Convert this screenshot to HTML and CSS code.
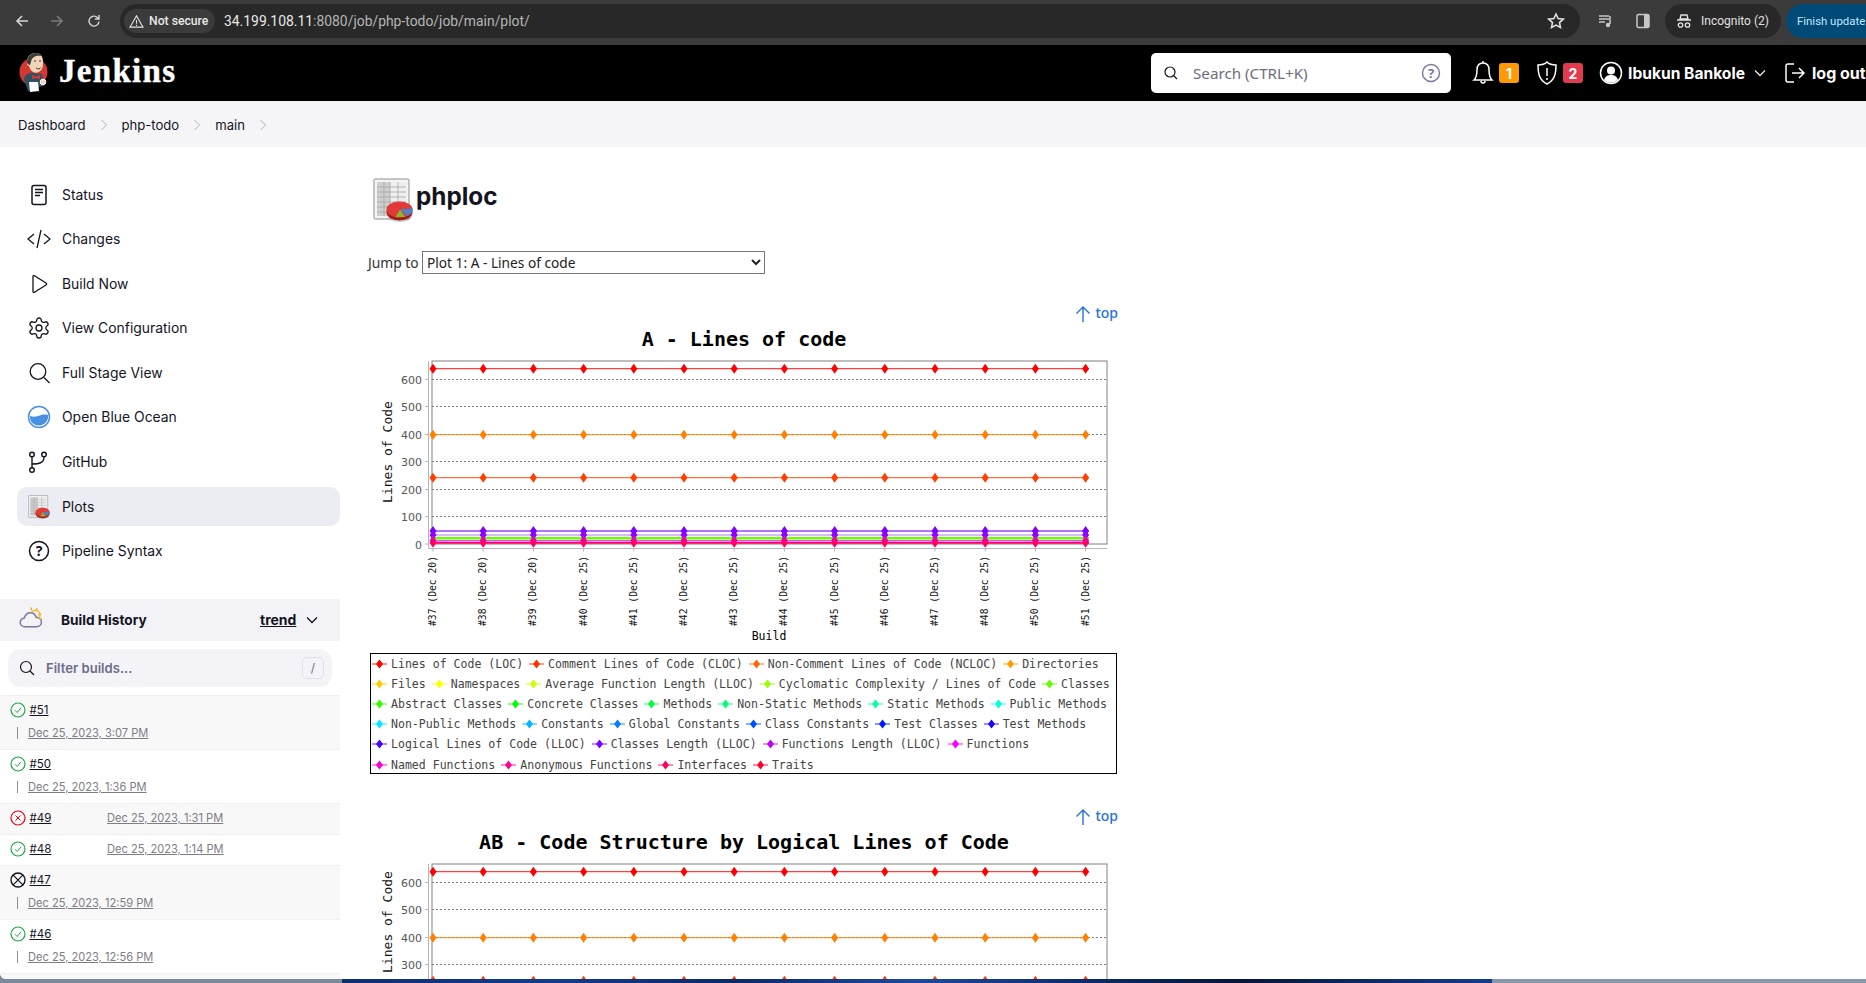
FILE: index.html
```html
<!DOCTYPE html>
<html lang="en">
<head>
<meta charset="utf-8">
<title>phploc [Jenkins]</title>
<link rel="stylesheet" href="styles.css">
</head>
<body>
<svg class="sprite" aria-hidden="true">
  <defs>
    <symbol id="plot-icon" viewBox="0 0 40 44">
      <rect x="1" y="1" width="35" height="40" rx="1" fill="#f4f4f2" stroke="#8f8f8f"/>
      <rect x="4" y="4" width="29" height="34" fill="#cfcfcf"/>
      <path d="M17 4h16v34H17z" fill="#efefef"/>
      <path d="M4 9h29M4 14h29M4 19h29M4 24h29M4 29h29M4 34h29M11 4v34M17 4v34M25 4v34" stroke="#a5a5a5" stroke-width=".8"/>
      <ellipse cx="27" cy="38" rx="12" ry="6" fill="#555" opacity=".3"/>
      <ellipse cx="26.500" cy="34" rx="13" ry="8.500" fill="#a91616"/>
      <ellipse cx="26.500" cy="31.500" rx="13" ry="8" fill="#e23a36"/>
      <path d="M27 31.500l12.500-1.200a13 8 0 0 1-5.500 7.800z" fill="#4f83c4"/>
      <path d="M27 31.500l5 7.600-9.500.2z" fill="#82bb2c"/>
    </symbol>
    <symbol id="ok" viewBox="0 0 16 16">
      <circle cx="8" cy="8" r="7" fill="none" stroke="#1ea64a" stroke-width="1.200"/>
      <path d="M5 8.300l2.200 2.200L11 5.800" fill="none" stroke="#1ea64a" stroke-width="1"/>
    </symbol>
    <symbol id="mk" viewBox="0 0 15 10">
      <path d="M0 5h15" stroke="currentColor" stroke-width="1.500" opacity=".6"/>
      <path d="M7.500 .5L11 5l-3.500 4.500L4 5z" fill="currentColor"/>
    </symbol>
    <path id="d" d="M0-5L3.500 0 0 5-3.500 0z"/>
    <g id="row">
      <use href="#d" x="65"/><use href="#d" x="115.200"/><use href="#d" x="165.400"/><use href="#d" x="215.600"/><use href="#d" x="265.800"/><use href="#d" x="316"/><use href="#d" x="366.200"/><use href="#d" x="416.400"/><use href="#d" x="466.600"/><use href="#d" x="516.800"/><use href="#d" x="567"/><use href="#d" x="617.200"/><use href="#d" x="667.400"/><use href="#d" x="717.600"/>
    </g>
  </defs>
</svg>

<div class="window">
  <div class="chrome">
    <svg class="c-ico back" viewBox="0 0 16 16"><path d="M14 8H3M8 3L3 8l5 5" fill="none" stroke="#d6d6d6" stroke-width="1.500"/></svg>
    <svg class="c-ico fwd" viewBox="0 0 16 16"><path d="M2 8h11M8 3l5 5-5 5" fill="none" stroke="#7b7b7b" stroke-width="1.500"/></svg>
    <svg class="c-ico reload" viewBox="0 0 16 16"><path d="M13 8.500A5 5 0 1 1 11.500 4.500L13 6M13 2v4H9" fill="none" stroke="#d6d6d6" stroke-width="1.400"/></svg>
    <div class="omnibox">
      <div class="chip">
        <svg class="warn" viewBox="0 0 16 16"><path d="M8 2L15 14H1zM8 6.500v4M8 11.500v1.200" fill="none" stroke="#e4e4e4" stroke-width="1.100"/></svg>
        <span>Not secure</span>
      </div>
      <span class="url">34.199.108.11<span class="dim">:8080/job/php-todo/job/main/plot/</span></span>
      <svg class="star" viewBox="0 0 16 16"><path d="M8 1.800l1.900 4.100 4.500.5-3.300 3 .9 4.400L8 11.600l-4 2.200.9-4.400-3.300-3 4.500-.5z" fill="none" stroke="#e0e0e0" stroke-width="1.400"/></svg>
    </div>
    <svg class="c-ico media" viewBox="0 0 16 16"><path d="M1 3h10M1 6h10M1 9h6M12 3v8" fill="none" stroke="#c9c9c9" stroke-width="1.500"/><circle cx="10" cy="12" r="2.200" fill="#c9c9c9"/></svg>
    <svg class="c-ico panel" viewBox="0 0 16 16"><rect x="2" y="1.500" width="12" height="13" rx="1.500" fill="none" stroke="#c9c9c9" stroke-width="1.500"/><rect x="9" y="2" width="5" height="12" fill="#c9c9c9"/></svg>
    <div class="incognito">
      <svg class="inc-ico" viewBox="0 0 16 16"><path d="M5 2h6l1 4H4zM1 7h14" fill="none" stroke="#e2e2e2" stroke-width="1.400"/><circle cx="4.500" cy="12" r="2.200" fill="none" stroke="#e2e2e2" stroke-width="1.300"/><circle cx="11.500" cy="12" r="2.200" fill="none" stroke="#e2e2e2" stroke-width="1.300"/></svg>
      <span>Incognito (2)</span>
    </div>
    <div class="finish">Finish update</div>
  </div>

  <header class="topbar">
    <svg class="logo" viewBox="0 0 30 40">
      <circle cx="14.500" cy="20" r="14" fill="#d33833"/>
      <path d="M5 27c1-5 6-7 10-6l8 1 2 12-5 1-1 4H9z" fill="#335061"/>
      <path d="M10 30h9l1 9-9 1z" fill="#fff"/>
      <circle cx="24" cy="30" r="2.800" fill="#f0d6b7" stroke="#fff"/>
      <path d="M13 23l4 1.500 4-1.500v4l-4-1-4 1z" fill="#d33833"/>
      <path d="M8 10c0-6 4-9 9-9 4 0 7 3 7 8 0 3 0 6-1 8-2 3-6 5-9 3-3-2-3-4-4-6-2 0-2-3-2-4z" fill="#f0d6b7"/>
      <path d="M8 11c-.5-6 4-10 9-10 3 0 5 1 6 3-5-1-10 0-11 6l-1 3c-1 0-2-1-3-2z" fill="#3c3c3c"/>
      <path d="M15 9h2M20 9h2M17 16c2 1.500 4 1 5-.5" fill="none" stroke="#49312a" stroke-width="1"/>
    </svg>
    <span class="brand">Jenkins</span>
    <div class="search">
      <svg class="search-ico" viewBox="0 0 16 16"><circle cx="7" cy="7" r="5" fill="none" stroke="#14141f" stroke-width="1.200"/><path d="M10.500 10.500L14 14" stroke="#14141f" stroke-width="1.200"/></svg>
      <span class="search-text">Search (CTRL+K)</span>
      <svg class="search-help" viewBox="0 0 20 20"><circle cx="10" cy="10" r="8.500" fill="none" stroke="#77779a" stroke-width="1.400"/><text x="10" y="14.500" class="qm">?</text></svg>
    </div>
    <svg class="bell" viewBox="0 0 22 26"><path d="M11 3c-4 0-6 3-6 7 0 5-1 8-3 10h18c-2-2-3-5-3-10 0-4-2-7-6-7zM9 21a2 2 0 0 0 4 0M11 1v2" fill="none" stroke="#fff" stroke-width="1.500"/></svg>
    <span class="badge amber">1</span>
    <svg class="shield" viewBox="0 0 22 26"><path d="M11 2c2 2 5 3 9 3 0 8-1 15-9 19C3 20 2 13 2 5c4 0 7-1 9-3zM11 8v8M11 18v2" fill="none" stroke="#fff" stroke-width="1.500"/></svg>
    <span class="badge red">2</span>
    <svg class="user" viewBox="0 0 24 24"><circle cx="12" cy="12" r="10.500" fill="none" stroke="#fff" stroke-width="1.500"/><circle cx="12" cy="9.500" r="4" fill="#fff"/><path d="M5 19c1-4 4-5 7-5s6 1 7 5a10 10 0 0 1-14 0z" fill="#fff"/></svg>
    <span class="uname">Ibukun Bankole</span>
    <svg class="caret" viewBox="0 0 12 8"><path d="M1 1.500l5 5 5-5" fill="none" stroke="#e8e8e8" stroke-width="1.300"/></svg>
    <svg class="logout" viewBox="0 0 22 24"><path d="M10 3H4a2 2 0 0 0-2 2v14a2 2 0 0 0 2 2h6M8 12h12M15 7l5 5-5 5" fill="none" stroke="#fff" stroke-width="1.500"/></svg>
    <span class="logout-text">log out</span>
  </header>

  <nav class="crumbs">
    <span class="crumb">Dashboard</span>
    <svg class="sep" viewBox="0 0 8 12"><path d="M1.500 1l5 5-5 5" fill="none" stroke="#b4b4c2" stroke-width="1"/></svg>
    <span class="crumb">php-todo</span>
    <svg class="sep" viewBox="0 0 8 12"><path d="M1.500 1l5 5-5 5" fill="none" stroke="#b4b4c2" stroke-width="1"/></svg>
    <span class="crumb">main</span>
    <svg class="sep" viewBox="0 0 8 12"><path d="M1.500 1l5 5-5 5" fill="none" stroke="#b4b4c2" stroke-width="1"/></svg>
  </nav>

  <div class="body">
    <aside class="side">
      <ul class="tasks">
        <li class="task"><svg class="t-ico" viewBox="0 0 24 24"><rect x="5" y="2.500" width="14" height="19" rx="2" fill="none" stroke="#14141f" stroke-width="1.500"/><path d="M8 6.500h8M8 9.500h8M8 12.500h5" stroke="#14141f" stroke-width="1.500"/></svg>Status</li>
        <li class="task"><svg class="t-ico" viewBox="0 0 24 24"><path d="M7 7l-6 5 6 5M17 7l6 5-6 5M14 3l-4 18" fill="none" stroke="#14141f" stroke-width="1.300"/></svg>Changes</li>
        <li class="task"><svg class="t-ico" viewBox="0 0 24 24"><path d="M6 4.500c0-1 .8-1.300 1.500-.8L19 11c.8.500.8 1.500 0 2L7.500 20.300c-.7.500-1.500.200-1.500-.8z" fill="none" stroke="#14141f" stroke-width="1.300"/></svg>Build Now</li>
        <li class="task"><svg class="t-ico" viewBox="0 0 24 24"><path d="M12.220 2h-.44a2 2 0 0 0-2 2v.18a2 2 0 0 1-1 1.730l-.43.250a2 2 0 0 1-2 0l-.15-.08a2 2 0 0 0-2.730.730l-.22.380a2 2 0 0 0 .730 2.730l.15.100a2 2 0 0 1 1 1.720v.510a2 2 0 0 1-1 1.740l-.15.090a2 2 0 0 0-.730 2.730l.22.380a2 2 0 0 0 2.730.730l.15-.08a2 2 0 0 1 2 0l.43.250a2 2 0 0 1 1 1.730V20a2 2 0 0 0 2 2h.44a2 2 0 0 0 2-2v-.18a2 2 0 0 1 1-1.730l.43-.25a2 2 0 0 1 2 0l.15.08a2 2 0 0 0 2.730-.73l.22-.39a2 2 0 0 0-.73-2.730l-.15-.08a2 2 0 0 1-1-1.740v-.5a2 2 0 0 1 1-1.740l.15-.09a2 2 0 0 0 .73-2.730l-.22-.38a2 2 0 0 0-2.730-.73l-.15.08a2 2 0 0 1-2 0l-.43-.25a2 2 0 0 1-1-1.730V4a2 2 0 0 0-2-2z" fill="none" stroke="#14141f" stroke-width="1.300"/><circle cx="12" cy="12" r="3" fill="none" stroke="#14141f" stroke-width="1.300"/></svg>View Configuration</li>
        <li class="task"><svg class="t-ico" viewBox="0 0 24 24"><circle cx="11" cy="10.500" r="7.800" fill="none" stroke="#14141f" stroke-width="1.300"/><path d="M17 16.500l5.500 5.500" stroke="#14141f" stroke-width="1.300"/></svg>Full Stage View</li>
        <li class="task"><svg class="t-ico" viewBox="0 0 24 24"><circle cx="12" cy="12" r="10.500" fill="#fff" stroke="#4a90e2" stroke-width="1.500"/><path d="M3 11c3 1 5 1 8 0s6-2 10-1c1 5-3 10.500-9 10.500S2.500 16 3 11z" fill="#4a90e2"/></svg>Open Blue Ocean</li>
        <li class="task"><svg class="t-ico" viewBox="0 0 24 24"><circle cx="5" cy="4.500" r="2.300" fill="none" stroke="#14141f" stroke-width="1.400"/><circle cx="5" cy="20" r="2.300" fill="none" stroke="#14141f" stroke-width="1.400"/><circle cx="17" cy="4.500" r="2.300" fill="none" stroke="#14141f" stroke-width="1.400"/><path d="M5 7v10.500M5 14c7 0 12-1 12-7" fill="none" stroke="#14141f" stroke-width="1.400"/></svg>GitHub</li>
        <li class="task current"><svg class="t-ico" viewBox="0 0 40 44"><use href="#plot-icon"/></svg>Plots</li>
        <li class="task"><svg class="t-ico" viewBox="0 0 24 24"><circle cx="12" cy="12" r="9.500" fill="none" stroke="#14141f" stroke-width="1.500"/><text x="12" y="17" class="qm dark">?</text></svg>Pipeline Syntax</li>
      </ul>

      <section class="history">
        <div class="h-head">
          <svg class="cloud" viewBox="0 0 26 24"><path d="M6 21a4.500 4.500 0 0 1-.5-9c1-3.500 3.500-5.500 6.500-5.500s5 2 6 5a4.500 4.500 0 0 1 1 9.500z" fill="none" stroke="#77779a" stroke-width="1.500"/><path d="M13 4l-.5-3M17 5l2-3M20 9l3-1.500M21 13h3" stroke="#f5a623" stroke-width="1.500"/><path d="M13 6a5 5 0 0 1 8 6" fill="none" stroke="#f5c023" stroke-width="1.500"/></svg>
          <span class="h-title">Build History</span>
          <span class="trend">trend</span>
          <svg class="h-caret" viewBox="0 0 12 8"><path d="M1 1.500l5 5 5-5" fill="none" stroke="#14141f" stroke-width="1.300"/></svg>
        </div>
        <div class="filter">
          <svg class="f-ico" viewBox="0 0 16 16"><circle cx="7" cy="7" r="5.500" fill="none" stroke="#14141f" stroke-width="1.200"/><path d="M11 11l4 4" stroke="#14141f" stroke-width="1.200"/></svg>
          <span class="f-text">Filter builds...</span>
          <span class="kbd">/</span>
        </div>
        <div class="build alt tall">
          <div class="b-top"><svg class="b-ico" viewBox="0 0 16 16"><use href="#ok"/></svg><span class="b-no">#51</span></div>
          <div class="b-sub"><span class="b-date">Dec 25, 2023, 3:07 PM</span></div>
        </div>
        <div class="build tall">
          <div class="b-top"><svg class="b-ico" viewBox="0 0 16 16"><use href="#ok"/></svg><span class="b-no">#50</span></div>
          <div class="b-sub"><span class="b-date">Dec 25, 2023, 1:36 PM</span></div>
        </div>
        <div class="build alt short">
          <svg class="b-ico" viewBox="0 0 16 16"><circle cx="8" cy="8" r="7" fill="none" stroke="#e6001f" stroke-width="1.200"/><path d="M5.500 5.500l5 5M10.500 5.500l-5 5" stroke="#e6001f" stroke-width="1"/></svg>
          <span class="b-no">#49</span><span class="b-date inline">Dec 25, 2023, 1:31 PM</span>
        </div>
        <div class="build short">
          <svg class="b-ico" viewBox="0 0 16 16"><use href="#ok"/></svg>
          <span class="b-no">#48</span><span class="b-date inline">Dec 25, 2023, 1:14 PM</span>
        </div>
        <div class="build alt tall">
          <div class="b-top"><svg class="b-ico" viewBox="0 0 16 16"><circle cx="8" cy="8" r="7" fill="none" stroke="#14141f" stroke-width="1.400"/><path d="M3.200 3.200l9.600 9.600M12.800 3.200l-9.600 9.600" stroke="#14141f" stroke-width="1.200"/></svg><span class="b-no">#47</span></div>
          <div class="b-sub"><span class="b-date">Dec 25, 2023, 12:59 PM</span></div>
        </div>
        <div class="build tall">
          <div class="b-top"><svg class="b-ico" viewBox="0 0 16 16"><use href="#ok"/></svg><span class="b-no">#46</span></div>
          <div class="b-sub"><span class="b-date">Dec 25, 2023, 12:56 PM</span></div>
        </div>
        <div class="build alt"></div>
      </section>
    </aside>

    <main class="content">
      <h1 class="page-title"><svg class="title-ico" viewBox="0 0 40 44"><use href="#plot-icon"/></svg><span class="page-name">phploc</span></h1>
      <div class="jump">
        <label class="jump-label" for="jump">Jump to</label>
        <select id="jump" class="jump-select"><option>Plot 1: A - Lines of code</option></select>
      </div>

      <article class="chart">
        <div class="top-row"><svg class="up" viewBox="0 0 16 18"><path d="M8 17V2M1.500 8.500L8 2l6.500 6.500" fill="none" stroke="#2670d8" stroke-width="1.400"/></svg><span class="top-link">top</span></div>
        <svg class="plot" viewBox="0 0 750 321">
          <text x="376" y="22" class="p-title">A - Lines of code</text>
          <text transform="translate(24 128) rotate(-90)" class="y-title">Lines of Code</text>
          <g id="plot-body">
            <rect x="64" y="37" width="675" height="183" fill="#fff" stroke="#808080"/>
            <path d="M64 55.500h675M64 82.500h675M64 110.500h675M64 137.500h675M64 165.500h675M64 192.500h675" stroke="#808080" stroke-dasharray="2 2"/>
            <path d="M60.500 37v187.500H739M57 55.500h4M57 82.500h4M57 110.500h4M57 137.500h4M57 165.500h4M57 192.500h4M57 220h4" fill="none" stroke="#b5b5b5"/>
            <text x="54" y="59.500" class="y-tick">600</text><text x="54" y="87" class="y-tick">500</text><text x="54" y="114.500" class="y-tick">400</text><text x="54" y="142" class="y-tick">300</text><text x="54" y="169.500" class="y-tick">200</text><text x="54" y="197" class="y-tick">100</text><text x="54" y="224.500" class="y-tick">0</text>
            <g stroke-width="1.300" fill="none" stroke-opacity=".75">
              <path d="M65 44.700h656" stroke="#ff0000"/>
              <path d="M65 110.700h656" stroke="#ff8000"/>
              <path d="M65 153.700h656" stroke="#ff4000"/>
              <path d="M65 207h656" stroke="#7a00ff"/>
              <path d="M65 211h656" stroke="#c080ff"/>
              <path d="M65 214.300h656" stroke="#66ff00" stroke-width="2.500" stroke-opacity="1"/>
              <path d="M65 216.600h656" stroke="#ff00ff"/>
              <path d="M65 218.700h656" stroke="#ff0066" stroke-width="2" stroke-opacity="1"/>
            </g>
            <use href="#row" y="44.700" fill="#ff0000"/>
            <use href="#row" y="110.700" fill="#ff8000"/>
            <use href="#row" y="153.700" fill="#ff4000"/>
            <use href="#row" y="207" fill="#7a00ff"/>
            <use href="#row" y="211" fill="#8f00ff"/>
            <use href="#row" y="216.600" fill="#e000e0"/>
            <use href="#row" y="218.700" fill="#ff0066"/>
            <path d="M65 224.500v3M115.200 224.500v3M165.400 224.500v3M215.600 224.500v3M265.800 224.500v3M316 224.500v3M366.200 224.500v3M416.400 224.500v3M466.600 224.500v3M516.800 224.500v3M567 224.500v3M617.200 224.500v3M667.400 224.500v3M717.600 224.500v3" stroke="#b5b5b5"/>
            <g class="x-ticks">
              <text transform="translate(67.500 302) rotate(-90)">#37 (Dec 20)</text>
              <text transform="translate(118 302) rotate(-90)">#38 (Dec 20)</text>
              <text transform="translate(168.300 302) rotate(-90)">#39 (Dec 20)</text>
              <text transform="translate(218.500 302) rotate(-90)">#40 (Dec 25)</text>
              <text transform="translate(268.700 302) rotate(-90)">#41 (Dec 25)</text>
              <text transform="translate(318.900 302) rotate(-90)">#42 (Dec 25)</text>
              <text transform="translate(369.100 302) rotate(-90)">#43 (Dec 25)</text>
              <text transform="translate(419.300 302) rotate(-90)">#44 (Dec 25)</text>
              <text transform="translate(469.500 302) rotate(-90)">#45 (Dec 25)</text>
              <text transform="translate(519.700 302) rotate(-90)">#46 (Dec 25)</text>
              <text transform="translate(569.900 302) rotate(-90)">#47 (Dec 25)</text>
              <text transform="translate(620.100 302) rotate(-90)">#48 (Dec 25)</text>
              <text transform="translate(670.300 302) rotate(-90)">#50 (Dec 25)</text>
              <text transform="translate(720.500 302) rotate(-90)">#51 (Dec 25)</text>
            </g>
            <text x="401" y="316" class="x-title">Build</text>
          </g>
        </svg>
        <div class="legend">
          <div class="l-row">
            <span class="l-item"><svg class="mk" style="color:hsl(0,100%,50%)"><use href="#mk"/></svg>Lines of Code (LOC)</span>
            <span class="l-item"><svg class="mk" style="color:hsl(12,100%,50%)"><use href="#mk"/></svg>Comment Lines of Code (CLOC)</span>
            <span class="l-item"><svg class="mk" style="color:hsl(25,100%,50%)"><use href="#mk"/></svg>Non-Comment Lines of Code (NCLOC)</span>
            <span class="l-item"><svg class="mk" style="color:hsl(37,100%,50%)"><use href="#mk"/></svg>Directories</span>
          </div>
          <div class="l-row">
            <span class="l-item"><svg class="mk" style="color:hsl(48,100%,50%)"><use href="#mk"/></svg>Files</span>
            <span class="l-item"><svg class="mk" style="color:hsl(60,100%,50%)"><use href="#mk"/></svg>Namespaces</span>
            <span class="l-item"><svg class="mk" style="color:hsl(72,100%,50%)"><use href="#mk"/></svg>Average Function Length (LLOC)</span>
            <span class="l-item"><svg class="mk" style="color:hsl(84,100%,50%)"><use href="#mk"/></svg>Cyclomatic Complexity / Lines of Code</span>
            <span class="l-item"><svg class="mk" style="color:hsl(96,100%,50%)"><use href="#mk"/></svg>Classes</span>
          </div>
          <div class="l-row">
            <span class="l-item"><svg class="mk" style="color:hsl(108,100%,50%)"><use href="#mk"/></svg>Abstract Classes</span>
            <span class="l-item"><svg class="mk" style="color:hsl(120,100%,50%)"><use href="#mk"/></svg>Concrete Classes</span>
            <span class="l-item"><svg class="mk" style="color:hsl(135,100%,50%)"><use href="#mk"/></svg>Methods</span>
            <span class="l-item"><svg class="mk" style="color:hsl(148,100%,50%)"><use href="#mk"/></svg>Non-Static Methods</span>
            <span class="l-item"><svg class="mk" style="color:hsl(160,100%,50%)"><use href="#mk"/></svg>Static Methods</span>
            <span class="l-item"><svg class="mk" style="color:hsl(172,100%,50%)"><use href="#mk"/></svg>Public Methods</span>
          </div>
          <div class="l-row">
            <span class="l-item"><svg class="mk" style="color:hsl(185,100%,50%)"><use href="#mk"/></svg>Non-Public Methods</span>
            <span class="l-item"><svg class="mk" style="color:hsl(197,100%,50%)"><use href="#mk"/></svg>Constants</span>
            <span class="l-item"><svg class="mk" style="color:hsl(210,100%,50%)"><use href="#mk"/></svg>Global Constants</span>
            <span class="l-item"><svg class="mk" style="color:hsl(222,100%,50%)"><use href="#mk"/></svg>Class Constants</span>
            <span class="l-item"><svg class="mk" style="color:hsl(234,100%,50%)"><use href="#mk"/></svg>Test Classes</span>
            <span class="l-item"><svg class="mk" style="color:hsl(246,100%,50%)"><use href="#mk"/></svg>Test Methods</span>
          </div>
          <div class="l-row">
            <span class="l-item"><svg class="mk" style="color:hsl(258,100%,50%)"><use href="#mk"/></svg>Logical Lines of Code (LLOC)</span>
            <span class="l-item"><svg class="mk" style="color:hsl(270,100%,50%)"><use href="#mk"/></svg>Classes Length (LLOC)</span>
            <span class="l-item"><svg class="mk" style="color:hsl(285,100%,50%)"><use href="#mk"/></svg>Functions Length (LLOC)</span>
            <span class="l-item"><svg class="mk" style="color:hsl(300,100%,50%)"><use href="#mk"/></svg>Functions</span>
          </div>
          <div class="l-row">
            <span class="l-item"><svg class="mk" style="color:hsl(312,100%,50%)"><use href="#mk"/></svg>Named Functions</span>
            <span class="l-item"><svg class="mk" style="color:hsl(325,100%,50%)"><use href="#mk"/></svg>Anonymous Functions</span>
            <span class="l-item"><svg class="mk" style="color:hsl(337,100%,50%)"><use href="#mk"/></svg>Interfaces</span>
            <span class="l-item"><svg class="mk" style="color:hsl(349,100%,50%)"><use href="#mk"/></svg>Traits</span>
          </div>
        </div>
      </article>

      <article class="chart">
        <div class="top-row"><svg class="up" viewBox="0 0 16 18"><path d="M8 17V2M1.500 8.500L8 2l6.500 6.500" fill="none" stroke="#2670d8" stroke-width="1.400"/></svg><span class="top-link">top</span></div>
        <svg class="plot" viewBox="0 0 750 321">
          <text x="376" y="22" class="p-title">AB - Code Structure by Logical Lines of Code</text>
          <text transform="translate(24 95) rotate(-90)" class="y-title">Lines of Code</text>
          <use href="#plot-body"/>
        </svg>
      </article>
    </main>
  </div>
</div>
<div class="desktop"><span class="wall-a"></span><span class="wall-b"></span><span class="wall-c"></span></div>
</body>
</html>
```
FILE: styles.css
```css
* { box-sizing: border-box; }
html, body { margin: 0; height: 983px; overflow: hidden; }
body { display: flex; flex-direction: column; background: #7b8a9a; font-family: Inter, "Noto Sans", sans-serif; color: #14141f; }
.sprite { position: absolute; width: 0; height: 0; }
.window { height: 979px; flex: none; display: flex; flex-direction: column; background: #fff; overflow: hidden; border-bottom-left-radius: 6px; }

/* browser chrome */
.chrome { flex: none; height: 45px; background: #3b3b3b; display: flex; align-items: center; font-family: Roboto, "Noto Sans", sans-serif; padding-bottom: 3px; overflow: hidden; }
.c-ico { width: 16px; height: 16px; flex: none; }
.back { margin-left: 14px; }
.fwd { margin-left: 19px; }
.reload { margin-left: 21px; }
.omnibox { width: 1460px; height: 34px; margin-left: 18px; border-radius: 17px; background: #282828; display: flex; align-items: center; padding-left: 4px; flex: none; }
.chip { height: 24px; width: 91px; border-radius: 12px; background: #3b3b3b; display: flex; align-items: center; padding-left: 5px; gap: 5px; color: #e8e8e8; font-size: 12.200px; font-weight: 500; }
.warn { width: 15px; height: 15px; }
.url { margin-left: 9px; color: #e8e8e8; font-size: 13.900px; }
.dim { color: #b5b5b5; }
.star { width: 18px; height: 18px; margin-left: auto; margin-right: 15px; }
.media { margin-left: 18px; }
.panel { margin-left: 21px; }
.incognito { margin-left: 14px; width: 116px; height: 34px; border-radius: 17px; background: #282828; color: #e0e0e0; font-size: 12px; display: flex; align-items: center; padding-left: 11px; gap: 9px; flex: none; }
.inc-ico { width: 16px; height: 16px; }
.finish { margin-left: 5px; width: 81px; height: 34px; border-radius: 17px 0 0 17px; background: #004a77; color: #c2e7ff; font-size: 11.400px; display: flex; align-items: center; padding-left: 11px; flex: none; white-space: nowrap; }

/* jenkins header */
.topbar { flex: none; height: 56px; background: #000; display: flex; align-items: center; padding-left: 19px; color: #fff; overflow: hidden; }
.logo { width: 30px; height: 40px; flex: none; margin-top: -2px; }
.brand { font-family: "Liberation Serif", serif; font-weight: 700; font-size: 33px; letter-spacing: 1.300px; margin-left: 10px; width: 120px; margin-top: -4px; flex: none; -webkit-text-stroke: .4px #fff; }
.search { width: 300px; height: 40px; background: #fff; border-radius: 5px; margin-left: 972px; display: flex; align-items: center; flex: none; padding: 0 10px 0 12px; }
.search-ico { width: 16px; height: 16px; flex: none; }
.search-text { margin-left: 14px; font-size: 15.200px; color: #6d6d7d; font-family: "Noto Sans", sans-serif; }
.search-help { width: 20px; height: 20px; margin-left: auto; }
.qm { font-family: "Noto Sans", sans-serif; font-size: 13px; font-weight: 700; text-anchor: middle; fill: #77779a; }
.qm.dark { fill: #14141f; font-size: 14px; }
.bell { width: 22px; height: 26px; margin-left: 21px; flex: none; }
.badge { width: 20px; height: 20px; margin-left: 5px; border-radius: 3px; font-weight: 700; font-size: 14px; color: #fff; display: flex; align-items: center; justify-content: center; flex: none; }
.amber { background: #fe9a05; }
.red { background: #e03b4e; }
.shield { width: 22px; height: 26px; margin-left: 17px; flex: none; }
.user { width: 24px; height: 24px; margin-left: 16px; flex: none; }
.uname { margin-left: 5px; width: 117px; font-weight: 700; font-size: 15.600px; white-space: nowrap; flex: none; }
.caret { width: 12px; height: 8px; margin-left: 9px; flex: none; }
.logout { width: 22px; height: 24px; margin-left: 18px; flex: none; }
.logout-text { margin-left: 6px; font-weight: 700; font-size: 16px; white-space: nowrap; flex: none; }

/* breadcrumb */
.crumbs { flex: none; height: 46px; background: #f5f5f8; display: flex; align-items: center; padding: 1px 0 0 18px; font-size: 13.100px; }
.crumb { color: #14141f; }
.sep { width: 8px; height: 12px; margin: 0 14px; flex: none; }

/* layout */
.body { flex: 1; min-height: 0; display: flex; overflow: hidden; }
.side { width: 340px; flex: none; padding-top: 28px; }
.content { flex: 1; padding: 31px 0 0 368px; margin-left: -340px; min-width: 0; }

/* tasks */
.tasks { list-style: none; margin: 0 0 0 17px; padding: 0; display: flex; flex-direction: column; gap: 5.600px; }
.task { height: 39px; display: flex; align-items: center; padding-left: 10px; gap: 11px; font-size: 13.900px; border-radius: 10px; color: #14141f; }
.task.current { background: #ecedf2; }
.t-ico { width: 24px; height: 24px; flex: none; }

/* history */
.history { margin-top: 28px; }
.h-head { height: 42px; background: #f2f2f7; display: flex; align-items: center; padding-left: 19px; font-size: 13.700px; font-weight: 700; }
.cloud { width: 25px; height: 24px; flex: none; margin-top: -3px; }
.h-title { margin-left: 17px; width: 199px; flex: none; }
.trend { text-decoration: underline; width: 46px; flex: none; font-size: 14px; }
.h-caret { width: 12px; height: 8px; }
.filter { height: 38px; margin: 8px 8px 8px; background: #f3f3f8; border-radius: 13px; display: flex; align-items: center; padding: 0 8px 0 11px; font-size: 13.100px; }
.f-ico { width: 16px; height: 16px; flex: none; }
.f-text { margin-left: 11px; color: #6d6d8a; font-weight: 600; }
.kbd { margin-left: auto; width: 22px; height: 22px; border: 1px solid #e0e0e8; border-radius: 5px; color: #6d6d8a; font-size: 12px; display: flex; align-items: center; justify-content: center; }
.build { border-top: 1px solid #f0f0f0; }
.alt { background: #f8f8f8; }
.tall { height: 54px; padding: 5px 0 0 10px; }
.short { height: 31px; display: flex; align-items: center; padding: 0 0 2px 10px; }
.build:last-child { height: 8px; }
.b-top { display: flex; align-items: center; height: 18px; }
.b-ico { width: 16px; height: 16px; flex: none; }
.b-no { margin-left: 3.500px; font-size: 11.500px; text-decoration: underline; color: #14141f; width: 77.500px; flex: none; }
.b-sub { margin: 8px 0 0 7px; border-left: 1px solid #8d8d94; height: 12px; display: flex; align-items: center; padding-left: 10px; }
.b-date { font-size: 11.100px; color: #7d7d85; text-decoration: underline; white-space: nowrap; }

/* content */
.page-title { margin: 0; height: 43px; display: flex; align-items: center; font-size: 24.300px; font-weight: 700; font-family: Inter, sans-serif; color: #14141f; padding-left: 5px; gap: 3px; }
.title-ico { width: 40px; height: 44px; flex: none; }
.page-name { margin-top: -7px; }
.jump { margin-top: 30px; height: 23px; display: flex; align-items: center; font-family: "Noto Sans", sans-serif; font-size: 13.800px; color: #333; }
.jump-label { width: 54px; flex: none; }
.jump-select { width: 343px; height: 23px; font-family: "Noto Sans", sans-serif; font-size: 13.700px; background: #fff; border: 1px solid #767676; padding: 0; color: #222; border-radius: 0; }
.chart { width: 750px; margin-top: 30px; height: 473px; }
.top-row { height: 20px; display: flex; align-items: center; justify-content: flex-end; gap: 4px; font-family: "Noto Sans", sans-serif; font-size: 14px; font-weight: 500; color: #2670d8; padding-bottom: 4px; }
.chart + .chart { margin-top: 33px; }
.chart:first-of-type { height: auto; }
.up { width: 16px; height: 18px; margin-top: 3px; }
.plot { display: block; width: 750px; height: 321px; overflow: visible; }
.plot text { font-family: "DejaVu Sans Mono", monospace; }
.p-title { font-size: 20px; font-weight: 700; text-anchor: middle; fill: #000; }
.plot .y-tick { font-family: "DejaVu Sans", sans-serif; font-size: 11px; text-anchor: end; fill: #555; }
.y-title { font-size: 13px; text-anchor: middle; fill: #111; }
.x-ticks { font-size: 9.700px; fill: #111; }
.x-title { font-size: 11.500px; text-anchor: middle; fill: #000; }

/* legend */
.legend { margin: 8px 0 0 2px; width: 747px; height: 121px; border: 1px solid #000; padding: 0 0 0 1px; font-family: "DejaVu Sans Mono", monospace; font-size: 11.550px; color: #444; display: flex; flex-direction: column; }
.l-row { height: 20.100px; flex: none; display: flex; align-items: center; gap: 6px; white-space: nowrap; }
.l-item { display: flex; align-items: center; gap: 4px; }
.mk { width: 15px; height: 10px; flex: none; }

/* desktop strip */
.desktop { flex: 1; display: flex; }
.wall-a { width: 342px; background: #7b8a9a; }
.wall-b { width: 1150px; background: linear-gradient(90deg, #0d2f6e 0, #123c8a 18%, #0a2a66 34%, #1c4a9c 50%, #0b2c6b 64%, #06163a 78%, #123c8a 100%); }
.wall-c { flex: 1; background: #8796a8; }
```
